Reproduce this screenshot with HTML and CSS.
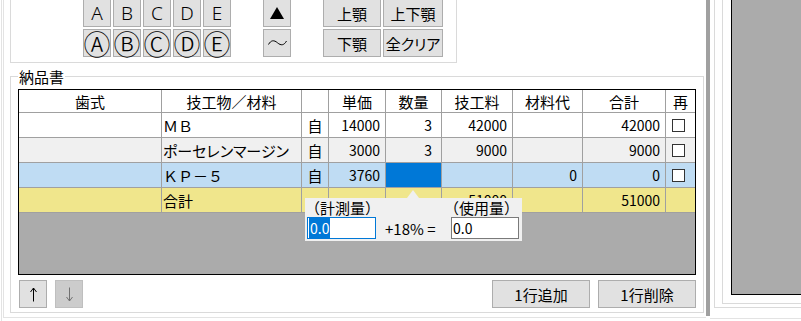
FILE: index.html
```html
<!DOCTYPE html>
<html lang="ja">
<head>
  <meta charset="UTF-8" />
  <title>納品書</title>
  <link rel="stylesheet" href="styles.css">
</head>
<body>
  <div class="window">
    <div class="main">
      <div class="frame">
        <div class="tools">
          <div class="letters">
            <button class="btn letter">A</button>
            <button class="btn letter">B</button>
            <button class="btn letter">C</button>
            <button class="btn letter">D</button>
            <button class="btn letter">E</button>
            <button class="btn circled">Ⓐ</button>
            <button class="btn circled">Ⓑ</button>
            <button class="btn circled">Ⓒ</button>
            <button class="btn circled">Ⓓ</button>
            <button class="btn circled">Ⓔ</button>
          </div>
          <div class="arch">
            <button class="btn">
              <svg width="14" height="12" viewBox="0 0 14 12"><polygon points="7,0 14,12 0,12" fill="#000"/></svg>
            </button>
            <button class="btn">
              <svg width="19" height="8" viewBox="0 0 19 8"><path d="M0.5 5.5 C3 1, 6 0.8, 9.5 3.8 C13 6.8, 16 6.5, 18.5 2" fill="none" stroke="#000" stroke-width="1"/></svg>
            </button>
          </div>
          <div class="jaw">
            <button class="btn">上顎</button>
            <button class="btn">上下顎</button>
            <button class="btn">下顎</button>
            <button class="btn kana">全クリア</button>
          </div>
        </div>

        <fieldset class="group">
          <legend>納品書</legend>
          <div class="grid">
            <div class="row head">
              <div class="cell">歯式</div>
              <div class="cell">技工物／材料</div>
              <div class="cell"></div>
              <div class="cell">単価</div>
              <div class="cell">数量</div>
              <div class="cell">技工料</div>
              <div class="cell">材料代</div>
              <div class="cell">合計</div>
              <div class="cell">再</div>
            </div>
            <div class="row">
              <div class="cell"></div>
              <div class="cell text">ＭＢ</div>
              <div class="cell mid">自</div>
              <div class="cell num">14000</div>
              <div class="cell num qty">3</div>
              <div class="cell num">42000</div>
              <div class="cell num"></div>
              <div class="cell num">42000</div>
              <div class="cell box"><span class="check"></span></div>
            </div>
            <div class="row alt">
              <div class="cell"></div>
              <div class="cell text kana">ポーセレンマージン</div>
              <div class="cell mid">自</div>
              <div class="cell num">3000</div>
              <div class="cell num qty">3</div>
              <div class="cell num">9000</div>
              <div class="cell num"></div>
              <div class="cell num">9000</div>
              <div class="cell box"><span class="check"></span></div>
            </div>
            <div class="row current">
              <div class="cell"></div>
              <div class="cell text">ＫＰ－５</div>
              <div class="cell mid">自</div>
              <div class="cell num">3760</div>
              <div class="cell num qty selected"></div>
              <div class="cell num"></div>
              <div class="cell num">0</div>
              <div class="cell num">0</div>
              <div class="cell box"><span class="check"></span></div>
            </div>
            <div class="row total">
              <div class="cell"></div>
              <div class="cell text">合計</div>
              <div class="cell"></div>
              <div class="cell num"></div>
              <div class="cell num"></div>
              <div class="cell num">51000</div>
              <div class="cell num"></div>
              <div class="cell num">51000</div>
              <div class="cell"></div>
            </div>

            <div class="popup">
              <div class="labels">
                <span>（計測量）</span>
                <span>（使用量）</span>
              </div>
              <div class="inputs">
                <div class="field focus"><span class="sel">0.0</span></div>
                <span class="calc">+18% =</span>
                <div class="field">0.0</div>
              </div>
            </div>
          </div>

          <div class="footer">
            <div class="moves">
              <button class="btn move">
                <svg width="7" height="15" viewBox="0 0 7 15"><path d="M3.5 1 V14.5 M0.5 5 L3.5 1 L6.5 5" fill="none" stroke="#000" stroke-width="1"/></svg>
              </button>
              <button class="btn move" disabled>
                <svg width="7" height="15" viewBox="0 0 7 15"><path d="M3.5 0.5 V14 M0.5 10 L3.5 14 L6.5 10" fill="none" stroke="#707070" stroke-width="1"/></svg>
              </button>
            </div>
            <div class="edits">
              <button class="btn wide">1行追加</button>
              <button class="btn wide">1行削除</button>
            </div>
          </div>
        </fieldset>
      </div>
    </div>

    <div class="splitter"></div>

    <div class="side">
      <div class="side-outer">
        <div class="side-inner">
          <div class="preview"></div>
        </div>
      </div>
    </div>
  </div>
</body>
</html>
```

FILE: styles.css
```css
* {
  box-sizing: border-box;
}
html,
body {
  margin: 0;
}
body {
  background: #fff;
  font-family: "Noto Sans CJK JP", "Noto Sans", sans-serif;
  font-size: 15px;
  color: #000;
  overflow: hidden;
}
.window {
  display: flex;
  width: 801px;
  height: 321px;
}

/* left pane */
.main {
  flex: none;
  width: 705px;
  margin-left: 1px;
  padding-left: 1px;
  border-left: 1px solid #e3e3e3;
}
.frame {
  height: 319px;
  padding: 0 2px 5px 6px;
  border-left: 1px solid #e3e3e3;
  border-bottom: 1px solid #e3e3e3;
}

.btn {
  display: flex;
  align-items: center;
  justify-content: center;
  height: 28px;
  padding: 0;
  border: 1px solid #adadad;
  background: #e1e1e1;
  color: #000;
  font-family: inherit;
  font-size: 15px;
  line-height: 1;
}
.btn:disabled {
  background: #cccccc;
  border-color: #bfbfbf;
}

.tools {
  display: flex;
  gap: 32px;
  width: 447px;
  margin-top: -1px;
  padding: 0 0 5px 72px;
  border: 1px solid #dadada;
  border-top: none;
}
.letters {
  display: grid;
  grid-template-columns: repeat(5, 28px);
  gap: 2px;
}
.letter {
  font-family: "Noto Sans", sans-serif;
  font-size: 19px;
  font-weight: 300;
}
.circled {
  font-size: 27px;
  font-weight: 300;
}
.arch {
  display: grid;
  grid-template-columns: 28px;
  gap: 2px;
}
.jaw {
  display: grid;
  grid-template-columns: 58px 60px;
  gap: 2px;
}
.kana {
  font-feature-settings: "palt";
}

/* group box */
.group {
  margin: 5px 0 0;
  padding: 4px 7px 4px;
  min-width: 0;
  border: 1px solid #dadada;
}
.group legend {
  padding: 0 1px;
  line-height: 17px;
}

.grid {
  position: relative;
  height: 186px;
  border: 1px solid #000;
  background: #ababab;
}
.row {
  display: grid;
  grid-template-columns: 143px 140px 27px 57px 56px 71px 70px 83px 29px;
  height: 25px;
  background: #fff;
}
.row.head {
  height: 23px;
}
.row.alt {
  background: #f0f0f0;
}
.row.current {
  background: #bfdcf3;
}
.row.total {
  background: #f0e68c;
}
.cell {
  display: flex;
  align-items: center;
  justify-content: center;
  padding: 0 5px;
  border-right: 1px solid #a0a0a0;
  border-bottom: 1px solid #a0a0a0;
  white-space: nowrap;
  overflow: hidden;
}
.cell:last-child {
  border-right: none;
}
.cell.text {
  justify-content: flex-start;
  padding-left: 1px;
}
.cell.num {
  justify-content: flex-end;
  font-size: 14px;
}
.cell.qty {
  padding-right: 9px;
}
.cell.selected {
  background: #0078d7;
}
.cell.box {
  justify-content: flex-start;
  padding-left: 6px;
}
.check {
  width: 13px;
  height: 13px;
  border: 1px solid #333;
  background: #fff;
}

/* popup editor */
.popup {
  position: absolute;
  left: 286px;
  top: 108px;
  width: 217px;
  height: 43px;
  padding: 1px 3px 0 2px;
  background: #f0f0f0;
}
.popup::before {
  content: "";
  position: absolute;
  left: 102px;
  top: -8px;
  border-left: 6px solid transparent;
  border-right: 6px solid transparent;
  border-bottom: 8px solid #f0f0f0;
}
.labels {
  display: flex;
  justify-content: space-between;
  line-height: 17px;
  margin-left: -2px;
}
.inputs {
  display: grid;
  grid-template-columns: 69px 1fr 68px;
  align-items: center;
  margin-top: 1px;
}
.field {
  height: 22px;
  padding-left: 1px;
  border: 1px solid #7a7a7a;
  background: #fff;
  font-size: 14px;
  line-height: 20px;
}
.field.focus {
  border-color: #0078d7;
}
.sel {
  padding: 0 1px;
  background: #0078d7;
  color: #fff;
}
.calc {
  padding-left: 9px;
  font-size: 15px;
}

.footer {
  display: flex;
  justify-content: space-between;
  margin-top: 5px;
}
.moves,
.edits {
  display: flex;
  gap: 8px;
}
.moves {
  margin-left: 1px;
}
.move {
  width: 28px;
}
.wide {
  width: 98px;
}

/* right pane */
.splitter {
  flex: none;
  width: 4px;
  height: 316px;
  background: #a0a0a0;
}
.side {
  flex: 1;
  height: 319px;
  padding-left: 4px;
  border-bottom: 1px solid #e3e3e3;
}
.side-outer {
  height: 308px;
  padding: 0 0 3px 7px;
  border-left: 1px solid #dadada;
  border-bottom: 1px solid #dadada;
}
.side-inner {
  height: 304px;
  padding: 0 0 8px 8px;
  border-left: 1px solid #dadada;
  border-bottom: 1px solid #dadada;
}
.preview {
  height: 100%;
  border-left: 1px solid #000;
  border-bottom: 1px solid #000;
  background: #ababab;
}
```
